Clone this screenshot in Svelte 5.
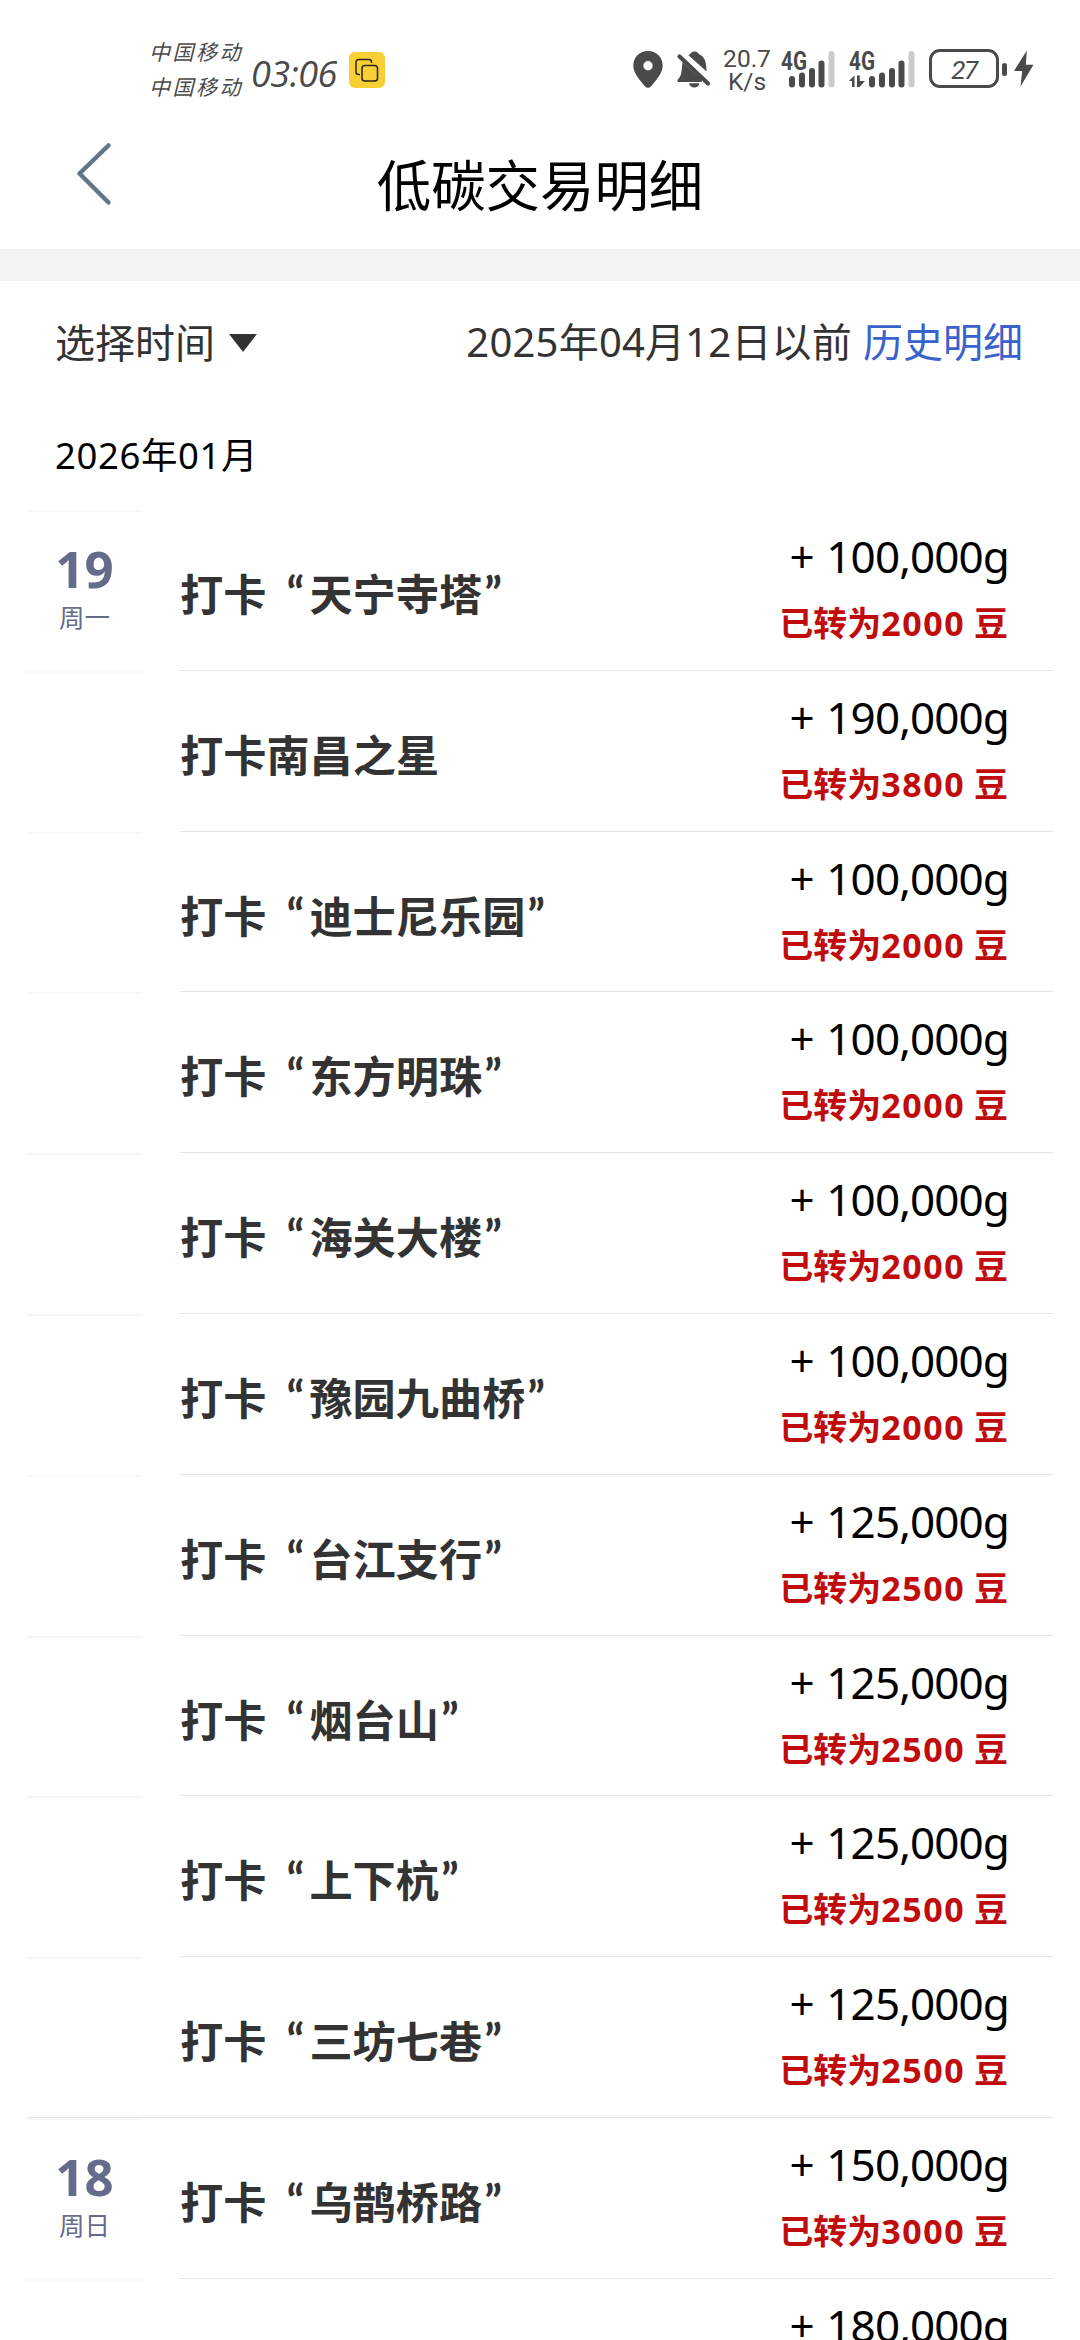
<script>
  let filterLabel = '选择时间'
  let month = '2026年01月'

  const days = [
    {
      day: '19',
      week: '周一',
      items: [
        { place: '天宁寺塔', grams: '100,000', beans: 2000 },
        { title: '打卡南昌之星', grams: '190,000', beans: 3800 },
        { place: '迪士尼乐园', grams: '100,000', beans: 2000 },
        { place: '东方明珠', grams: '100,000', beans: 2000 },
        { place: '海关大楼', grams: '100,000', beans: 2000 },
        { place: '豫园九曲桥', grams: '100,000', beans: 2000 },
        { place: '台江支行', grams: '125,000', beans: 2500 },
        { place: '烟台山', grams: '125,000', beans: 2500 },
        { place: '上下杭', grams: '125,000', beans: 2500 },
        { place: '三坊七巷', grams: '125,000', beans: 2500 }
      ]
    },
    {
      day: '18',
      week: '周日',
      items: [
        { place: '乌鹊桥路', grams: '150,000', beans: 3000 },
        { title: '', grams: '180,000' }
      ]
    }
  ]
</script>

<div class="screen">
  <div class="status">
    <div class="carriers">
      <span>中国移动</span>
      <span>中国移动</span>
    </div>
    <span class="clock">03:06</span>
    <svg class="badge" width="36" height="36" viewBox="0 0 36 36">
      <rect width="36" height="36" rx="6" fill="#f8d035" />
      <g fill="none" stroke="#2b2413" stroke-width="1.5">
        <path d="M11 22.500H9.500a2.500 2.500 0 0 1-2.500-2.500V10a2.500 2.500 0 0 1 2.500-2.500H20a2.500 2.500 0 0 1 2.500 2.500v1" />
        <rect x="13" y="13.500" width="15.500" height="15.500" rx="2.800" />
      </g>
    </svg>

    <div class="indicators">
      <svg class="pin" width="30" height="37" viewBox="0 0 30 37">
        <path d="M15 0C6.500 0 .3 6.400.3 14.400c0 8 7 15.200 11.700 20.800 1.800 2.100 4.200 2.100 6 0 4.700-5.600 11.700-12.800 11.700-20.800C29.700 6.400 23.500 0 15 0zm0 10a4.700 4.700 0 1 1 0 9.400 4.700 4.700 0 0 1 0-9.400z" fill="#4a4a4a" />
      </svg>
      <svg class="bell" width="34" height="37" viewBox="0 0 34 37">
        <g fill="#4a4a4a">
          <path d="M11.500 4.200C13 3.200 13.500 2.600 14 2c1.500-2 5.500-2 7 0 .5.700 1 1.300 2 1.800 4.700 2.400 6.300 6.500 6.600 16.700z" />
          <path d="M5.400 11.200 24.500 28.500 25 31H1.500C.2 31 0 29.200 1 28.300c3-2.500 3.800-7 4.400-17.100z" />
          <path d="M12 32.300h10.500c-.8 5.600-9.700 5.600-10.500 0z" />
        </g>
        <path d="M2.500 5.500 31 32.500" stroke="#4a4a4a" stroke-width="4.200" stroke-linecap="round" />
      </svg>
      <div class="speed">
        <span>20.7</span>
        <span>K/s</span>
      </div>
      <svg class="signal" width="56" height="38" viewBox="0 0 56 38">
        <text x="1" y="19.500" class="net" textLength="26" lengthAdjust="spacingAndGlyphs">4G</text>
        <g fill="#4a4a4a">
          <rect x="9" y="26" width="6" height="11.500" rx="3" />
          <rect x="19" y="22.500" width="6" height="15" rx="3" />
          <rect x="29" y="18" width="6" height="19.500" rx="3" />
          <rect x="38.500" y="10.500" width="6" height="27" rx="3" />
        </g>
        <rect x="48.500" y="1" width="6" height="36.500" rx="3" fill="#cbcbcb" />
      </svg>
      <svg class="signal second" width="68" height="38" viewBox="0 0 68 38">
        <text x="1" y="19.500" class="net" textLength="26" lengthAdjust="spacingAndGlyphs">4G</text>
        <g fill="#4a4a4a">
          <path d="M.8 31 6.500 25.500V37H4v-6zM9 25.500h2.800V31H17l-5.500 6H9z" />
          <rect x="21" y="26" width="6" height="11.500" rx="3" />
          <rect x="31" y="22.500" width="6" height="15" rx="3" />
          <rect x="41" y="18" width="6" height="19.500" rx="3" />
          <rect x="50.500" y="10.500" width="6" height="27" rx="3" />
        </g>
        <rect x="60.500" y="1" width="6" height="36.500" rx="3" fill="#cbcbcb" />
      </svg>
      <div class="battery">27</div>
      <div class="nub"></div>
      <svg class="bolt" width="20" height="37" viewBox="0 0 20 37">
        <path d="M12.800.5 0 21h8.200L6.500 36.500 19.500 14.800h-7.700z" fill="#4a4a4a" />
      </svg>
    </div>
  </div>

  <header class="header">
    <svg class="back" width="40" height="66" viewBox="0 0 40 66">
      <path d="M34.500 4.500 5.500 32.500 34.500 61.500" fill="none" stroke="#627688" stroke-width="4.500" stroke-linecap="round" stroke-linejoin="round" />
    </svg>
    <h1>低碳交易明细</h1>
  </header>

  <div class="band"></div>

  <div class="filter">
    <div class="picker">
      <span>{filterLabel}</span>
      <i class="caret"></i>
    </div>
    <div class="history">
      <span class="before">2025年04月12日以前</span>
      <a href="#history">历史明细</a>
    </div>
  </div>

  <div class="month">{month}</div>

  <div class="list">
    {#each days as group, g}
      {#each group.items as item, i}
        <div class="row" class:last={i === group.items.length - 1 && g < days.length - 1}>
          <div class="date">
            {#if i === 0}
              <b>{group.day}</b>
              <span>{group.week}</span>
            {/if}
          </div>
          <div class="entry">
            <div class="title">
              {#if item.place}
                打卡<span class="quote open">“</span>{item.place}<span class="quote close">”</span>
              {:else}
                {item.title}
              {/if}
            </div>
            <div class="amount">
              <div class="grams">+ {item.grams}g</div>
              {#if item.beans}
                <div class="beans">已转为<em>{item.beans}</em> 豆</div>
              {/if}
            </div>
          </div>
        </div>
      {/each}
    {/each}
  </div>
</div>

<style>
:global(body) {
    background: #fff;
}

.screen {
    width: 1080px;
    height: 2340px;
    overflow: hidden;
    display: flex;
    flex-direction: column;
    background: #fff;
    color: #333;
    font-family: "Noto Sans", "Noto Sans CJK SC", sans-serif;
}

.status {
    flex: none;
    height: 120px;
    display: flex;
    align-items: flex-start;
    color: #4a4a4a;
}

.carriers {
    width: 94px;
    margin: 34px 0 0 149px;
    display: flex;
    flex-direction: column;
    font-family: "Noto Sans CJK SC", sans-serif;
    font-size: 21px;
    font-style: italic;
    font-weight: 400;
    line-height: 35px;
    letter-spacing: 2.5px;
    white-space: nowrap;
}

.clock {
    width: 86px;
    margin: 49px 0 0 8px;
    font-family: "Open Sans", sans-serif;
    font-size: 36px;
    font-style: italic;
    font-weight: 400;
    line-height: 50px;
    letter-spacing: -0.5px;
    white-space: nowrap;
}

.badge {
    margin: 52px 0 0 12px;
}

.indicators {
    flex: 1;
    display: flex;
    align-items: flex-start;
    padding-top: 50px;
}

.indicators svg {
    flex: none;
    overflow: visible;
}

.pin {
    margin: 1px 0 0 248px;
}

.bell {
    margin: 1px 0 0 14px;
}

.speed {
    width: 46px;
    margin: -2px 0 0 13px;
    display: flex;
    flex-direction: column;
    align-items: center;
    font-family: Roboto, sans-serif;
    font-size: 24.5px;
    line-height: 22.5px;
}

.signal {
    margin-left: 10px;
}

.signal.second {
    margin-left: 12px;
}

.net {
    font-family: Roboto, sans-serif;
    font-size: 25px;
    font-weight: 700;
    fill: #4a4a4a;
}

.battery {
    flex: none;
    box-sizing: border-box;
    width: 70px;
    height: 39px;
    margin: -1px 0 0 13px;
    border: 3px solid #4a4a4a;
    border-radius: 11px;
    font-family: Roboto, sans-serif;
    font-size: 26px;
    font-style: italic;
    line-height: 36px;
    text-align: center;
    letter-spacing: -1.5px;
}

.nub {
    flex: none;
    width: 5px;
    height: 13px;
    margin: 13px 7px 0 3px;
    border-radius: 2.5px;
    background: #4a4a4a;
}

.header {
    flex: none;
    height: 129px;
    display: flex;
    align-items: flex-start;
}

.back {
    margin: 21px 0 0 74px;
}

h1 {
    margin: 24px 0 0;
    width: 852px;
    text-align: center;
    font-family: "Noto Sans CJK SC", sans-serif;
    font-size: 54.4px;
    font-weight: 400;
    line-height: 78px;
    color: #000;
}

.band {
    flex: none;
    height: 32px;
    background: #f3f3f3;
}

.filter {
    flex: none;
    height: 124px;
    display: flex;
    justify-content: space-between;
    padding: 0 57px 0 55px;
    font-size: 40px;
    line-height: 122px;
}

.picker {
    display: flex;
    align-items: center;
    gap: 14px;
}

.caret {
    border: 14px solid transparent;
    border-top: 18px solid #333;
    border-bottom: 0;
}

.history {
    display: flex;
    gap: 11px;
}

.before {
    letter-spacing: 0.2px;
}

.history a {
    color: #3a62cc;
    text-decoration: none;
}

.month {
    flex: none;
    height: 105px;
    padding-left: 55px;
    font-size: 36.5px;
    line-height: 101px;
    letter-spacing: 0.6px;
    color: #000;
}

.list {
    flex: none;
    padding: 0 27px;
}

.row {
    height: 160.8px;
    display: flex;
    justify-content: space-between;
}

.date {
    box-sizing: border-box;
    width: 115px;
    border-top: 2px solid #f8f8f8;
    display: flex;
    flex-direction: column;
    align-items: center;
    color: #656c8b;
}

.row.last .date {
    border-bottom: 1px solid #e3e3e3;
}

.date b {
    margin-top: 22px;
    font-size: 51px;
    line-height: 68px;
}

.date span {
    margin-top: -1px;
    font-size: 25.5px;
    line-height: 32px;
}

.entry {
    box-sizing: border-box;
    width: 873px;
    border-bottom: 1px solid #e3e3e3;
    display: flex;
    justify-content: space-between;
    padding-right: 45px;
}

.row.last .entry {
    width: 911px;
    padding-left: 38px;
}

.title {
    display: flex;
    font-family: "Noto Sans CJK SC", sans-serif;
    font-size: 43.2px;
    font-weight: 700;
    line-height: 165px;
    white-space: nowrap;
}

.quote {
    box-sizing: border-box;
    width: 43px;
    font-family: Lato, sans-serif;
    font-size: 46px;
    font-weight: 700;
}

.open {
    padding-right: 5px;
    text-align: right;
}

.close {
    padding-left: 2px;
}

.amount {
    display: flex;
    flex-direction: column;
    align-items: flex-end;
    white-space: nowrap;
}

.grams {
    margin: 16px -1px 0 0;
    font-size: 44px;
    line-height: 60px;
    letter-spacing: -0.9px;
    word-spacing: 2px;
    color: #000;
}

.beans {
    margin-top: 12px;
    font-size: 34px;
    font-weight: 700;
    line-height: 50px;
    color: #c00c0c;
}

.beans em {
    font-style: normal;
    letter-spacing: 1.5px;
}
</style>
